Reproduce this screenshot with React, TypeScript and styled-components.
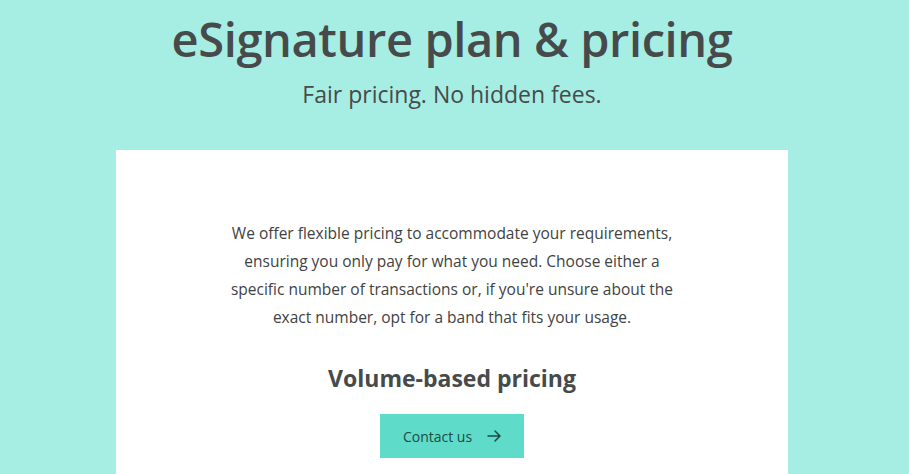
import { FC } from "react";
import styled, { createGlobalStyle } from "styled-components";

const GlobalStyle = createGlobalStyle`
  html, body {
    margin: 0;
    padding: 0;
    background: #a6eee4;
    font-family: "Open Sans", "Liberation Sans", sans-serif;
    color: #4a4a4a;
  }
`;

const Page = styled.div`
  width: 904px;
  display: flex;
  flex-direction: column;
  align-items: center;
  height: 474px;
  overflow: hidden;
`;

const Title = styled.h1`
  margin: 11px 0 0;
  font-size: 47px;
  font-weight: 600;
  line-height: 56px;
  letter-spacing: -0.4px;
  color: #474a4a;
`;

const Subtitle = styled.p`
  margin: 13px 0 0;
  font-size: 23px;
  line-height: 28px;
  color: #474a4a;
`;

const Card = styled.div`
  margin-top: 42px;
  width: 672px;
  flex: 1;
  background: #ffffff;
  display: flex;
  flex-direction: column;
  align-items: center;
  padding-top: 69px;
  box-sizing: border-box;
`;

const Intro = styled.p`
  margin: 0;
  width: 480px;
  text-align: center;
  font-size: 15.5px;
  line-height: 28px;
  color: #3f4242;
`;

const Heading = styled.h2`
  margin: 32px 0 0;
  font-size: 23px;
  font-weight: 700;
  line-height: 30px;
  color: #474a4a;
`;

const Button = styled.button`
  margin-top: 21px;
  display: flex;
  align-items: center;
  gap: 14px;
  border: none;
  height: 44px;
  padding: 0 22px 0 23px;
  background: #5fdcc9;
  color: #1d4a45;
  font-family: inherit;
  font-size: 14px;
  font-weight: 500;
  cursor: pointer;
`;

const Arrow: FC = () => (
  <svg width="16" height="16" viewBox="0 0 16 16" fill="none" stroke="currentColor" strokeWidth="1.5" strokeLinecap="round" strokeLinejoin="round">
    <path d="M2 8h12M9 3l5 5-5 5" />
  </svg>
);

const App: FC = () => {
  return (
    <>
      <GlobalStyle />
      <Page>
        <Title>eSignature plan &amp; pricing</Title>
        <Subtitle>Fair pricing. No hidden fees.</Subtitle>
        <Card>
          <Intro>
            We offer flexible pricing to accommodate your requirements,
            <br />
            ensuring you only pay for what you need. Choose either a
            <br />
            specific number of transactions or, if you're unsure about the
            <br />
            exact number, opt for a band that fits your usage.
          </Intro>
          <Heading>Volume-based pricing</Heading>
          <Button>
            Contact us
            <Arrow />
          </Button>
        </Card>
      </Page>
    </>
  );
};

export default App;
